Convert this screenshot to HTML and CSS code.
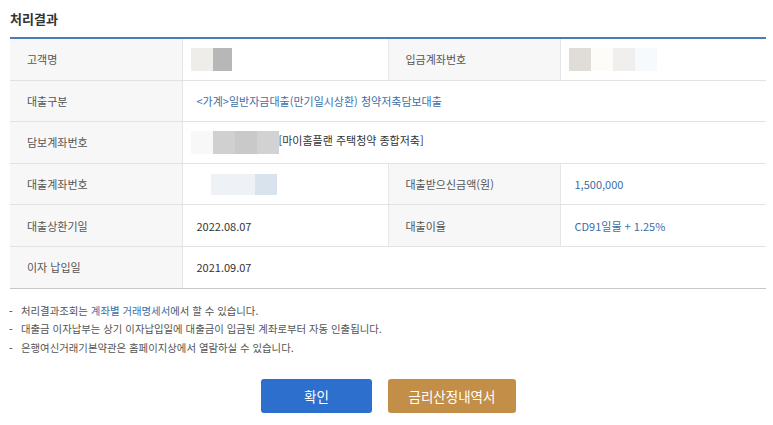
FILE: index.html
```html
<!DOCTYPE html>
<html lang="ko">
<head>
  <meta charset="UTF-8">
  <title>처리결과</title>
  <link rel="stylesheet" href="styles.css">
</head>
<body>

<h3 class="title">처리결과</h3>

<table class="result">
  <colgroup>
    <col class="c-th"><col class="c-td"><col class="c-th2"><col>
  </colgroup>
  <tr>
    <th>고객명</th>
    <td><span class="mask"><i style="background:#efedea"></i><i style="background:#b7b7b7;width:19px"></i></span></td>
    <th>입금계좌번호</th>
    <td><span class="mask"><i style="background:#e0ddd9"></i><i style="background:#fdfcf8"></i><i style="background:#f0efed"></i><i style="background:#f6fafc"></i></span></td>
  </tr>
  <tr>
    <th>대출구분</th>
    <td colspan="3" class="blue">&lt;가계&gt;일반자금대출(만기일시상환) 청약저축담보대출</td>
  </tr>
  <tr>
    <th>담보계좌번호</th>
    <td colspan="3"><span class="mask"><i style="background:#f8f8f8"></i><i style="background:#d0d0d0"></i><i style="background:#c9c9c9"></i><i style="background:#d2d2d2"></i></span>[마이홈플랜 주택청약 종합저축]</td>
  </tr>
  <tr>
    <th>대출계좌번호</th>
    <td><span class="mask shift"><i style="background:#eef1f5"></i><i style="background:#eef1f5"></i><i style="background:#d9e3ee"></i></span></td>
    <th>대출받으신금액(원)</th>
    <td class="blue">1,500,000</td>
  </tr>
  <tr>
    <th>대출상환기일</th>
    <td>2022.08.07</td>
    <th>대출이율</th>
    <td class="blue">CD91일물 + 1.25%</td>
  </tr>
  <tr class="last">
    <th>이자 납입일</th>
    <td colspan="3">2021.09.07</td>
  </tr>
</table>

<ul class="notes">
  <li>처리결과조회는 <a href="#">계좌별 거래명세서</a>에서 할 수 있습니다.</li>
  <li>대출금 이자납부는 상기 이자납입일에 대출금이 입금된 계좌로부터 자동 인출됩니다.</li>
  <li>은행여신거래기본약관은 홈페이지상에서 열람하실 수 있습니다.</li>
</ul>

<div class="btns">
  <button class="btn btn-blue">확인</button>
  <button class="btn btn-brown">금리산정내역서</button>
</div>

</body>
</html>
```

FILE: styles.css
```css
body { margin: 0; padding: 0 7px 0 10px; font-family: "Noto Sans CJK KR", "Noto Sans", sans-serif; color: #333; background: #fff; }
.title { margin: 0; padding-top: 9px; height: 28px; font-size: 13px; font-weight: bold; color: #333; }

.result { width: 100%; border-collapse: collapse; border-top: 2px solid #4a7db5; font-size: 11px; }
.result .c-th { width: 172px; }
.result .c-td { width: 206px; }
.result .c-th2 { width: 172px; }
.result th, .result td { height: 40.6px; padding: 0; border-bottom: 1px solid #e2e2e2; text-align: left; font-weight: normal; }
.result th { background: #f7f7f7; color: #555; padding-left: 17px; border-left: 1px solid #e6e6e6; border-right: 1px solid #e6e6e6; }
.result tr th:first-child { border-left: 0; }
.result td { padding-left: 14px; color: #333; }
.result tr.last th, .result tr.last td { border-bottom: 1px solid #c8c8c8; }
.blue { color: #3c6ea6 !important; }

.mask { display: inline-flex; vertical-align: middle; height: 23px; margin-left: -6px; }
.mask i { display: block; width: 22px; height: 100%; }
.mask.shift { margin-left: 14px; height: 21px; }

.notes { list-style: none; margin: 13px 0 0; padding: 0; font-size: 10.4px; color: #555; }
.notes li { height: 18.5px; line-height: 18.5px; padding-left: 11px; position: relative; }
.notes li::before { content: "-"; position: absolute; left: -1px; top: 0; color: #333; }
.notes a { color: #3c6ea6; text-decoration: none; }

.btns { display: flex; justify-content: center; gap: 16px; margin-top: 22px; padding-left: 1px; }
.btn { height: 34px; border: 0; border-radius: 3px; color: #fff; font-family: inherit; font-size: 13.5px; cursor: pointer; }
.btn-blue { width: 111px; background: #2d6fcc; }
.btn-brown { width: 128px; background: #c38e48; }
```
